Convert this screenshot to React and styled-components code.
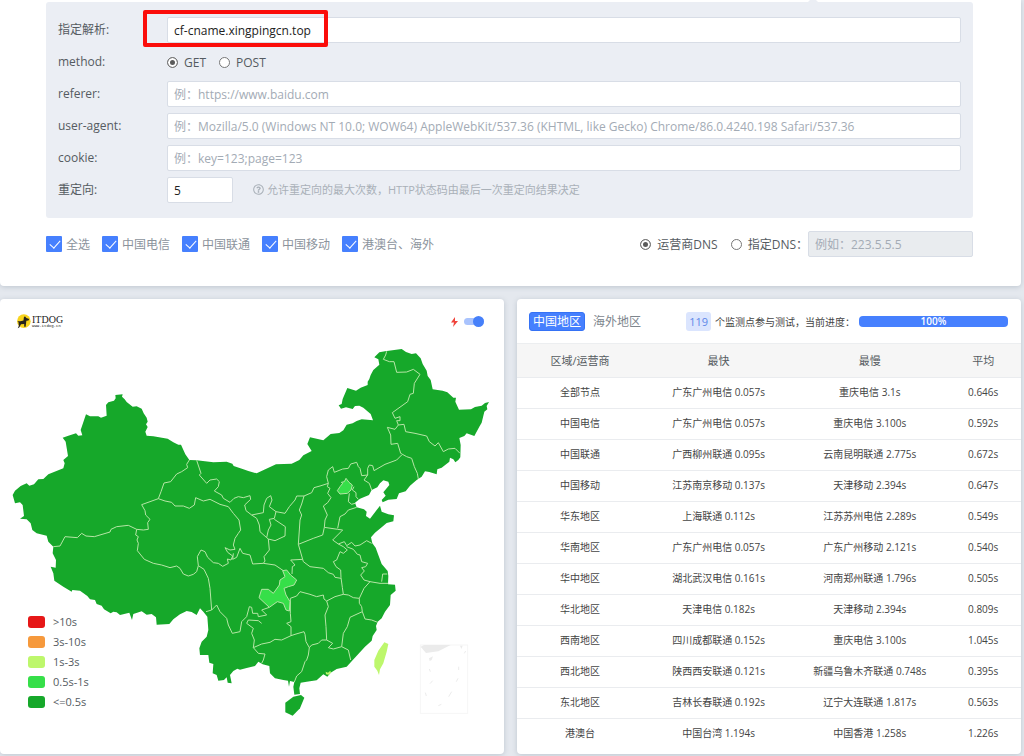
import React from 'react';
import styled, {createGlobalStyle} from 'styled-components';
import {FaRegQuestionCircle} from 'react-icons/fa';

const GlobalStyle = createGlobalStyle`
  * {
    box-sizing: border-box;
  }
  body {
    margin: 0;
    background-color: #e4e8ee;
    color: #555b61;
    font-family: "Open Sans", "Noto Sans CJK SC", sans-serif;
    font-size: 12px;
  }
  input, button {
    font-family: inherit;
    font-size: inherit;
  }
`;

const Page = styled.div`
  padding: 0 3px 3px 0;
`;

const Card = styled.section`
  position: relative;
  background-color: #fff;
  border-radius: 4px;
  box-shadow: 0 1px 5px rgba(80, 100, 120, 0.25);
`;

const FormCard = styled(Card)`
  padding: 2px 48px 29px 46px;
  border-radius: 0 0 4px 4px;
`;

const OptionPanel = styled.div`
  position: relative;
  padding: 12px;
  border-radius: 3px;
  background-color: #ebeef4;
  &::before {
    content: "";
    position: absolute;
    top: -5px;
    right: 153px;
    border: 7px solid transparent;
    border-top-width: 0;
    border-bottom-color: #ebeef4;
  }
`;

const FormRow = styled.div`
  position: relative;
  display: grid;
  grid-template-columns: 109px 1fr;
  align-items: center;
  height: 32px;
`;

const RowLabel = styled.label`
  padding-bottom: 2px;
`;

const TextInput = styled.input`
  width: ${({$width}) => $width || '100%'};
  height: 26px;
  padding: 0 6px;
  border: 1px solid #d8dde6;
  border-radius: 2px;
  background-color: ${({disabled}) => (disabled ? '#e9ecef' : '#fff')};
  color: #222;
  &::placeholder {
    color: #a3abb5;
    opacity: 1;
  }
`;

const Highlight = styled.div`
  position: absolute;
  top: -4px;
  left: 85px;
  width: 185px;
  height: 37px;
  border: 4px solid #fb0d0a;
  border-radius: 2px;
  pointer-events: none;
`;

const Inline = styled.div`
  display: flex;
  align-items: center;
  gap: ${({$gap}) => $gap}px;
`;

const Choice = styled.label`
  display: flex;
  align-items: center;
  gap: ${({$muted}) => ($muted ? 4 : 6)}px;
  color: ${({$muted}) => ($muted ? '#8b939c' : '#555b61')};
  white-space: nowrap;
`;

const Radio = styled.input`
  appearance: none;
  width: 11px;
  height: 11px;
  margin: 0;
  border: 1px solid #777;
  border-radius: 50%;
  background-color: #fff;
  &:checked {
    background-color: #5b5b5b;
    box-shadow: inset 0 0 0 2px #fff;
  }
`;

const Check = styled.input`
  appearance: none;
  position: relative;
  width: 16px;
  height: 16px;
  margin: 0;
  border-radius: 1px;
  background-color: #4680fe;
  &::after {
    content: "";
    position: absolute;
    top: 2px;
    left: 6px;
    width: 5px;
    height: 9px;
    border: solid #fff;
    border-width: 0 1px 1px 0;
    transform: rotate(42deg);
  }
`;

const Hint = styled.span`
  display: flex;
  align-items: center;
  gap: 3px;
  padding-bottom: 2px;
  color: #a9b0b8;
  font-size: 11px;
`;

const FilterBar = styled.div`
  display: flex;
  justify-content: space-between;
  align-items: center;
  margin-top: 13px;
`;

const Columns = styled.div`
  display: grid;
  grid-template-columns: 1fr 1fr;
  gap: 13px;
  margin-top: 13px;
`;

const MapHead = styled.header`
  display: flex;
  justify-content: space-between;
  align-items: center;
  height: 41px;
  padding: 4px 20px 0 16px;
`;

const LogoText = styled.div`
  display: flex;
  flex-direction: column;
  color: #222;
  font-family: "Liberation Serif", serif;
  font-size: 10px;
  line-height: 9px;
  small {
    font-family: "Liberation Mono", monospace;
    font-size: 4px;
    line-height: 4px;
  }
`;

const Switch = styled.input`
  appearance: none;
  position: relative;
  width: 20px;
  height: 7px;
  margin: 0;
  border-radius: 4px;
  background-color: #a9c3fd;
  &::after {
    content: "";
    position: absolute;
    top: -2px;
    right: 0;
    width: 11px;
    height: 11px;
    border-radius: 50%;
    background-color: #4680fa;
  }
`;

const MapSvg = styled.svg`
  display: block;
  width: 100%;
`;

const Legend = styled.ul`
  position: absolute;
  left: 28px;
  bottom: 42px;
  margin: 0;
  padding: 0;
  list-style: none;
  font-size: 11px;
  li {
    display: flex;
    align-items: center;
    gap: 8px;
    height: 20px;
  }
`;

const Swatch = styled.i`
  width: 17px;
  height: 12px;
  border-radius: 3px;
  background-color: ${({$colour}) => $colour};
`;

const ResultHead = styled.header`
  display: flex;
  align-items: center;
  gap: 4px;
  height: 44px;
  padding: 0 13px 0 12px;
  color: #444;
  font-size: 10px;
  white-space: nowrap;
`;

const Tab = styled.button`
  height: 19px;
  padding: 0 3px;
  border: 1px solid ${({$active}) => ($active ? '#3572f5' : 'transparent')};
  border-radius: 3px;
  background-color: ${({$active}) => ($active ? '#4680fe' : 'transparent')};
  color: ${({$active}) => ($active ? '#fff' : '#7d858d')};
  font-size: 12px;
  line-height: 17px;
`;

const Count = styled.span`
  margin-left: auto;
  padding: 0 3px;
  border-radius: 3px;
  background-color: #dbe5fe;
  color: #5d87e8;
  font-size: 11px;
  line-height: 19px;
`;

const Progress = styled.div`
  flex: 0 0 149px;
  height: 11px;
  border-radius: 4px;
  background-color: #4680fe;
  color: #fff;
  font-weight: 600;
  line-height: 11px;
  text-align: center;
`;

const ResultTable = styled.table`
  width: 100%;
  margin-bottom: 4px;
  border-collapse: collapse;
  table-layout: fixed;
  color: #444;
  font-size: 10px;
  text-align: center;
  th {
    height: 34px;
    padding: 0 0 2px;
    border-top: 1px solid #eceef0;
    background-color: #f6f6f6;
    color: #555b61;
    font-size: 11px;
    font-weight: 400;
  }
  td {
    height: 31px;
    padding: 0 0 3px;
    border-top: 1px solid #eaecef;
  }
`;

const carriers = ['全选', '中国电信', '中国联通', '中国移动', '港澳台、海外'];

const levels = [
    ['#e61717', '>10s'],
    ['#f6993c', '3s-10s'],
    ['#bdf76c', '1s-3s'],
    ['#36df49', '0.5s-1s'],
    ['#16a82a', '<=0.5s']
];

const results = [
    ['全部节点', '广东广州电信 0.057s', '重庆电信 3.1s', '0.646s'],
    ['中国电信', '广东广州电信 0.057s', '重庆电信 3.100s', '0.592s'],
    ['中国联通', '广西柳州联通 0.095s', '云南昆明联通 2.775s', '0.672s'],
    ['中国移动', '江苏南京移动 0.137s', '天津移动 2.394s', '0.647s'],
    ['华东地区', '上海联通 0.112s', '江苏苏州电信 2.289s', '0.549s'],
    ['华南地区', '广东广州电信 0.057s', '广东广州移动 2.121s', '0.540s'],
    ['华中地区', '湖北武汉电信 0.161s', '河南郑州联通 1.796s', '0.505s'],
    ['华北地区', '天津电信 0.182s', '天津移动 2.394s', '0.809s'],
    ['西南地区', '四川成都联通 0.152s', '重庆电信 3.100s', '1.045s'],
    ['西北地区', '陕西西安联通 0.121s', '新疆乌鲁木齐联通 0.748s', '0.395s'],
    ['东北地区', '吉林长春联通 0.192s', '辽宁大连联通 1.817s', '0.563s'],
    ['港澳台', '中国台湾 1.194s', '中国香港 1.258s', '1.226s']
];

const mainland = `38,1485 45,1472 62,1458 80,1450 88,1457 102,1453 115,1438 130,1437 145,1423 190,1405 194,1390
  190,1380 204,1368 197,1325 188,1313 205,1307 228,1300 235,1307 247,1306 242,1290 258,1243 270,1249 295,1249
  303,1253 320,1247 318,1215 325,1207 342,1202 347,1195 346,1185 368,1183 366,1190 374,1198 380,1206 398,1220
  410,1219 425,1226 431,1240 440,1253 443,1265 438,1273 443,1281 436,1295 440,1307 460,1309 503,1316 520,1327
  535,1334 543,1334 556,1363 568,1380 590,1381 640,1387 680,1385 697,1391 701,1398 730,1408 745,1413 770,1420
  828,1393 875,1391 898,1380 910,1366 935,1353 922,1332 930,1312 970,1321 992,1302 1018,1299 1030,1291 1040,1274
  1058,1270 1070,1263 1085,1258 1119,1261 1112,1242 1090,1223 1078,1217 1065,1218 1058,1227 1038,1222 1023,1226 1016,1216
  1025,1212 1028,1197 1042,1164 1068,1172 1082,1163 1103,1155 1103,1145 1108,1137 1112,1125 1120,1110 1138,1094 1135,1078 1123,1072
  1138,1057 1155,1054 1205,1047 1218,1056 1235,1062 1248,1060 1262,1075 1268,1092 1280,1112 1283,1128 1292,1140
  1298,1168 1328,1172 1342,1177 1360,1193 1368,1193 1366,1205 1377,1229 1413,1228 1425,1221 1445,1217 1455,1209
  1467,1206 1460,1218 1462,1228 1453,1235 1445,1268 1438,1280 1423,1308 1400,1300 1393,1308 1378,1314 1382,1335
  1381,1372 1375,1380 1366,1387 1360,1378 1350,1373 1348,1385 1325,1403 1312,1408 1310,1423 1288,1416 1275,1414
  1265,1430 1250,1440 1230,1457 1217,1474 1197,1480 1190,1497 1165,1499 1148,1507 1145,1500 1157,1487 1150,1477
  1168,1455 1165,1445 1150,1441 1140,1450 1132,1462 1115,1470 1107,1485 1080,1496 1065,1508 1070,1522 1092,1528
  1100,1535 1098,1548 1110,1556 1130,1530 1140,1517 1145,1535 1165,1543 1182,1546 1180,1564 1160,1569 1145,1582
  1125,1598 1113,1612 1117,1630 1127,1643 1135,1665 1145,1692 1163,1713 1165,1728 1164,1753 1185,1754 1187,1772
  1172,1785 1170,1815 1155,1835 1145,1855 1133,1865 1128,1878 1130,1890 1118,1908 1115,1922 1095,1940 1075,1962
  1055,1984 1040,2000 1010,2007 992,2018 982,2030 970,2023 950,2041 920,2045 902,2048 898,2065 900,2082 883,2084
  880,2060 883,2046 870,2043 867,2060 864,2042 850,2040 825,2035 810,2020 808,1998 788,1993 775,1985 765,1998 740,2004 720,2009 712,2006
  700,2013 690,2025 695,2050 683,2048 680,2032 672,2040 655,2042 650,2025 638,2020 640,1992 628,1988 625,1965 600,1965
  598,1945 605,1925 620,1910 625,1890 622,1850 610,1835 600,1825 590,1845 575,1836 560,1833 540,1843 520,1858 508,1872 470,1874
  468,1852 455,1842 440,1844 425,1834 400,1842 396,1860 388,1838 360,1845 350,1837 340,1835 332,1840 312,1828 305,1817 290,1812
  285,1800 270,1798 262,1788 240,1772 217,1770 215,1775 190,1760 163,1742 160,1720 152,1700 167,1703 168,1680
  158,1660 160,1640 145,1625 140,1607 110,1600 97,1590 92,1570 80,1558 60,1556 72,1548 68,1515 60,1507 45,1510`;

const borders = [
    '568,1380 560,1393 563,1403 545,1415 530,1422 512,1445 492,1449 483,1475 475,1496 425,1514 435,1532 437,1545 450,1558 443,1568 445,1588 430,1590 410,1588 385,1576 350,1580 333,1588 330,1596 283,1610 258,1608 245,1600 232,1613 195,1610 180,1638 160,1640',
    '410,1588 407,1605 415,1610 411,1620 415,1630 412,1652 433,1678 460,1690 485,1695 510,1703 530,1698 540,1705 550,1722 565,1728 580,1723 590,1715 595,1697 612,1708 625,1735 630,1765 635,1830 618,1835',
    '595,1697 592,1670 603,1650 615,1655 623,1672 640,1688 655,1690 668,1699 685,1690 682,1677 693,1680 698,1668 683,1657 675,1643 690,1650 705,1648 700,1635 705,1615 715,1600 722,1590 717,1560 700,1540 685,1520 660,1513 630,1498 610,1503 587,1493 583,1515 568,1525 550,1518 525,1518 515,1507 495,1503 475,1496',
    '590,1381 603,1420 598,1425 620,1450 630,1440 650,1437 658,1445 655,1460 643,1473 665,1485 670,1495 690,1507 702,1495 715,1490 730,1493 750,1487 752,1498 734,1515 738,1532 755,1545 790,1538 792,1515 800,1495 812,1487 816,1500 808,1520 828,1535 855,1540 868,1520 885,1500 890,1488 912,1488 935,1478 942,1463 960,1458 985,1450',
    '755,1545 770,1555 778,1575 780,1595 800,1613',
    '828,1535 823,1555 808,1558 813,1575 805,1590 800,1613 805,1617 825,1622 855,1608 856,1580 823,1558',
    '805,1617 808,1650 792,1670 795,1683 790,1690',
    '700,1660 698,1678 710,1672 720,1645 728,1660 750,1665 758,1692 790,1690 825,1695 850,1712',
    '912,1488 905,1512 898,1530 905,1545 900,1560 898,1590 895,1633 940,1615 968,1605 973,1582',
    '985,1450 980,1430 985,1410 998,1400 1003,1417 1028,1407 1045,1405 1052,1392 1070,1387 1075,1400 1080,1405 1085,1427 1103,1425 1103,1405 1108,1395 1118,1397 1122,1412 1155,1393 1190,1380 1205,1365',
    '1103,1425 1092,1440 1108,1450 1115,1470',
    '985,1450 982,1460 990,1465 983,1480 993,1493 983,1508 970,1518 982,1545 975,1560 973,1582 1013,1588 1028,1590 998,1620 1015,1632 1033,1625 1040,1637 1055,1627 1065,1638 1080,1635 1100,1622 1115,1630',
    '1070,1522 1045,1530 1035,1542 1020,1550 1013,1585',
    '1048,1480 1045,1505 1055,1513 1065,1510',
    '1062,1460 1057,1470 1068,1478 1068,1490 1075,1498',
    '1040,1640 1060,1648 1072,1663 1080,1665 1085,1685 1103,1690 1097,1700 1085,1703 1093,1713 1082,1725 1092,1740 1110,1745 1140,1750 1165,1750',
    '1015,1632 1030,1640 1042,1650 1030,1660 1020,1655 1010,1680 1000,1685 1008,1700 1022,1710 1023,1733 1027,1762 1030,1783 1005,1790 980,1803',
    '895,1633 908,1678 910,1685 930,1700 970,1705 985,1718 1000,1723 1005,1732 1023,1735',
    '908,1678 872,1680 885,1695 877,1700 876,1722',
    '871,1795 890,1788 900,1775 930,1783 950,1790 970,1785 972,1797 980,1803 985,1820 975,1845 978,1880 980,1920 965,1920 955,1930 935,1935 928,1943 918,1925 915,1903 912,1895 885,1903 873,1907',
    '1030,1783 1045,1785 1060,1793 1078,1795 1092,1765 1110,1745',
    '1145,1745 1148,1722 1162,1722',
    '1078,1795 1078,1810 1085,1820 1087,1835 1095,1857 1115,1860 1133,1867',
    '1087,1835 1065,1845 1050,1852 1042,1880 1030,1900 1025,1940 1000,1947 985,1943 998,1930 980,1920',
    '1025,1940 1045,1950 1052,1980',
    '871,1795 871,1840 873,1865 860,1870 873,1880 873,1907 845,1920 825,1918 810,1927 785,1932 760,1943 775,1960 795,1962 790,1980 785,1990',
    '928,1943 925,1965 920,1980 915,1985 905,2015 890,2028 883,2046',
    '760,1943 763,1920 755,1900 760,1885 740,1870 745,1860 775,1862 785,1870',
    '635,1830 650,1815 660,1835 680,1855 685,1875 697,1900 720,1895 725,1865 740,1850 748,1820 755,1822 758,1840 773,1840 775,1850 800,1845 785,1830 808,1822',
    '1160,1054 1157,1065 1150,1078 1168,1085 1182,1085 1190,1117 1220,1116 1240,1108 1260,1123 1243,1150 1240,1180 1230,1183 1223,1205 1177,1238 1185,1255 1200,1250 1200,1262 1190,1262 1195,1275 1212,1273 1217,1295 1245,1300 1280,1308 1288,1325 1305,1338 1315,1328 1330,1355 1345,1347 1365,1345 1380,1360',
    '1195,1275 1185,1288 1162,1282 1172,1305 1173,1333 1193,1330 1202,1360 1220,1370 1235,1375 1243,1400 1252,1420 1255,1437'
];

const LogoMark = () => (
    <svg width="15" height="15" viewBox="0 0 42 42" aria-hidden="true">
      <circle cx="22" cy="20" r="19" fill="#f8d41d" />
      <path d="M25 6 29 11 37 14 35 18 29 19 28 27 27 36 23 36 23 28 14 29 11 34 9 38 5 40 8 33 7 23 4 20 12 20 21 18 22 10Z" fill="#26231c" />
    </svg>
);

const ChinaMap = () => (
    <MapSvg viewBox="0 1020 1512 1140" role="img" aria-label="中国地区">
      <polygon points={mainland} fill="#16a82a" />
      <g fill="none" stroke="#b5e6a5" strokeWidth="3" strokeLinejoin="round">
        {borders.map((points, key) => (<polyline key={key} points={points} />))}
        <g fill="#36df49">
          <polygon points="1038,1435 1047,1447 1057,1455 1053,1470 1042,1480 1020,1482 1012,1472 1020,1460 1028,1450 1024,1447 1033,1445" />
          <polygon points="848,1712 860,1710 872,1725 890,1740 882,1755 865,1760 852,1765 858,1785 870,1805 868,1833 858,1830 850,1810 832,1805 808,1822 795,1810 777,1793 785,1768 805,1768 820,1780 838,1755 840,1740 855,1730" />
        </g>
      </g>
      <polygon points="880,2090 903,2085 913,2093 900,2125 878,2147 856,2137 856,2108" fill="#16a82a" />
      <polygon points="1153,1927 1165,1932 1160,1955 1150,1990 1140,2008 1137,2025 1132,2012 1123,2000 1123,1980 1135,1952" fill="#bdf76c" />
      <polygon points="977,2015 984,2018 991,2012 993,2018 986,2024 978,2023" fill="#bdf76c" />
      <rect x="1261" y="1935" width="142" height="205" fill="none" stroke="#f6f6f6" strokeWidth="3" />
      <path d="M1262 1940 1272 1935H1352L1315 1954 1278 1959ZM1287 1975 1299 1969 1295 1980 1289 1983ZM1380 1937H1388L1384 1947Z" fill="#ebebeb" />
      <path d="M1397 1953 1393 1960M1376 2000V2010M1374 2035 1369 2045M1355 2075 1346 2090M1324 2113 1315 2117M1276 2078 1279 2088M1298 2042 1290 2051M1288 2007 1291 2015" stroke="#ececec" strokeWidth="3" />
    </MapSvg>
);

class App extends React.Component {
    render() {
        return (
            <Page>
              <GlobalStyle />
              <FormCard>
                <OptionPanel>
                  <FormRow>
                    <RowLabel htmlFor="resolve">指定解析:</RowLabel>
                    <TextInput id="resolve" defaultValue="cf-cname.xingpingcn.top" />
                    <Highlight />
                  </FormRow>
                  <FormRow role="radiogroup" aria-labelledby="method">
                    <RowLabel as="span" id="method">method:</RowLabel>
                    <Inline $gap={13}>
                      <Choice><Radio type="radio" name="method" defaultChecked />GET</Choice>
                      <Choice><Radio type="radio" name="method" />POST</Choice>
                    </Inline>
                  </FormRow>
                  <FormRow>
                    <RowLabel htmlFor="referer">referer:</RowLabel>
                    <TextInput id="referer" placeholder="例：https://www.baidu.com" />
                  </FormRow>
                  <FormRow>
                    <RowLabel htmlFor="agent">user-agent:</RowLabel>
                    <TextInput id="agent" placeholder="例：Mozilla/5.0 (Windows NT 10.0; WOW64) AppleWebKit/537.36 (KHTML, like Gecko) Chrome/86.0.4240.198 Safari/537.36" />
                  </FormRow>
                  <FormRow>
                    <RowLabel htmlFor="cookie">cookie:</RowLabel>
                    <TextInput id="cookie" placeholder="例：key=123;page=123" />
                  </FormRow>
                  <FormRow>
                    <RowLabel htmlFor="redirect">重定向:</RowLabel>
                    <Inline $gap={20}>
                      <TextInput id="redirect" $width="66px" defaultValue="5" />
                      <Hint><FaRegQuestionCircle />允许重定向的最大次数，HTTP状态码由最后一次重定向结果决定</Hint>
                    </Inline>
                  </FormRow>
                </OptionPanel>
                <FilterBar>
                  <Inline $gap={12}>
                    {carriers.map((name) => (
                        <Choice key={name} $muted><Check type="checkbox" defaultChecked />{name}</Choice>
                    ))}
                  </Inline>
                  <Inline $gap={13}>
                    <Choice><Radio type="radio" name="dns" defaultChecked />运营商DNS</Choice>
                    <Inline $gap={0}>
                      <Choice><Radio type="radio" name="dns" />指定DNS：</Choice>
                      <TextInput $width="165px" placeholder="例如：223.5.5.5" aria-label="指定DNS" disabled />
                    </Inline>
                  </Inline>
                </FilterBar>
              </FormCard>

              <Columns>
                <Card>
                  <MapHead>
                    <Inline $gap={1}>
                      <LogoMark />
                      <LogoText>ITDOG<small>www.itdog.cn</small></LogoText>
                    </Inline>
                    <Inline as="label" $gap={6}>
                      <svg width="7" height="10" viewBox="0 0 14 20" aria-hidden="true">
                        <path d="M8 0 0 11H6L4 20 14 8H8Z" fill="#f0443c" />
                      </svg>
                      <Switch type="checkbox" role="switch" defaultChecked />
                    </Inline>
                  </MapHead>
                  <ChinaMap />
                  <Legend>
                    {levels.map(([colour, text]) => (<li key={text}><Swatch $colour={colour} />{text}</li>))}
                  </Legend>
                </Card>

                <Card>
                  <ResultHead>
                    <Tab $active>中国地区</Tab>
                    <Tab>海外地区</Tab>
                    <Count>119</Count>
                    <span>个监测点参与测试，当前进度：</span>
                    <Progress role="progressbar" aria-valuenow={100}>100%</Progress>
                  </ResultHead>
                  <ResultTable>
                    <colgroup>
                      <col width="25%" />
                      <col width="30%" />
                      <col width="30%" />
                      <col width="15%" />
                    </colgroup>
                    <thead>
                      <tr><th>区域/运营商</th><th>最快</th><th>最慢</th><th>平均</th></tr>
                    </thead>
                    <tbody>
                      {results.map((row) => (
                          <tr key={row[0]}>{row.map((cell, key) => (<td key={key}>{cell}</td>))}</tr>
                      ))}
                    </tbody>
                  </ResultTable>
                </Card>
              </Columns>
            </Page>
        );
    }
}

export default App;
